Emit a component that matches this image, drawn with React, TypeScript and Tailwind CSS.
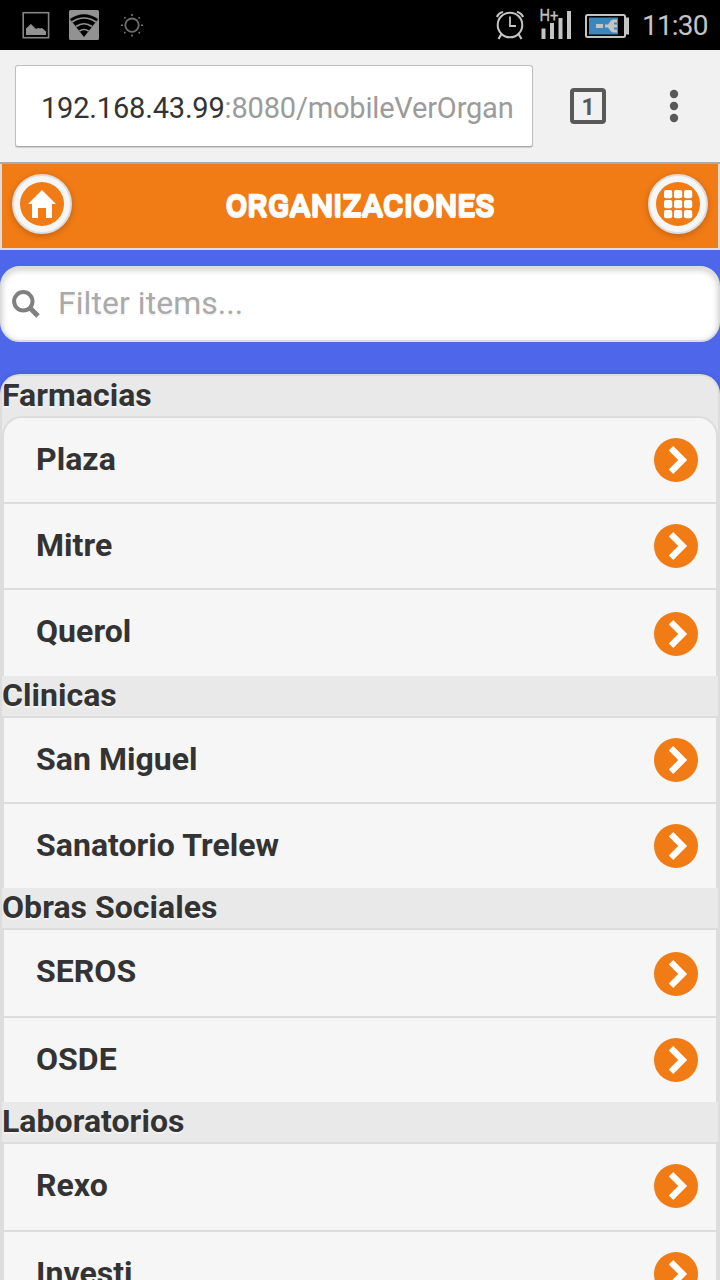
import React from 'react';

type Item = { name: string; height: string; icon: string };
type Section = { title: string; items: Item[] };

const sections: Section[] = [
  {
    title: 'Farmacias',
    items: [
      { name: 'Plaza', height: 'h-[86px] rounded-t-[20px]', icon: 'mt-[20px]' },
      { name: 'Mitre', height: 'h-[86px]', icon: 'mt-[20px]' },
      { name: 'Querol', height: 'h-[88px]', icon: 'mt-[22px]' },
    ],
  },
  {
    title: 'Clinicas',
    items: [
      { name: 'San Miguel', height: 'h-[86px]', icon: 'mt-[20px]' },
      { name: 'Sanatorio Trelew', height: 'h-[86px]', icon: 'mt-[20px]' },
    ],
  },
  {
    title: 'Obras Sociales',
    items: [
      { name: 'SEROS', height: 'h-[88px]', icon: 'mt-[22px]' },
      { name: 'OSDE', height: 'h-[86px]', icon: 'mt-[20px]' },
    ],
  },
  {
    title: 'Laboratorios',
    items: [
      { name: 'Rexo', height: 'h-[88px]', icon: 'mt-[20px]' },
      { name: 'Investi', height: 'h-[86px]', icon: 'mt-[20px]' },
    ],
  },
];

function StatusBar() {
  return (
    <div className="flex h-[50px] shrink-0 items-center bg-black">
      <svg width="160" height="50" viewBox="0 0 160 50" fill="none">
        <rect x="23.2" y="12.7" width="25.4" height="25" stroke="#858585" strokeWidth="1.6" />
        <path d="M26 35V28.500l5-4.500 5 5 2-1 2 0.500 2-0.500 4 3.500V35Z" fill="#929292" />
        <rect x="69" y="10" width="30" height="30" rx="1.500" fill="#929292" />
        <path d="M84 37 69.800 19Q84 9.500 98.200 19Z" fill="#000" />
        <path d="M72 22Q84 14 96 22M76 26.500Q84 21 92 26.500M79.500 31Q84 28 88.500 31" stroke="#929292" strokeWidth="1.700" />
        <circle cx="132" cy="25.200" r="6.700" stroke="#6c6c6c" strokeWidth="1.800" />
        <path d="M131.200 14h1.600v2h-1.600zM131.200 34.500h1.600v2h-1.600zM121 24.500h2v1.600h-2zM141 24.500h2v1.600h-2zM124 17h1.600v1.600H124zM138.500 17h1.600v1.600h-1.600zM124 31.800h1.600v1.600H124zM138.500 31.800h1.600v1.600h-1.600z" fill="#777" />
      </svg>
      <svg className="ml-auto" width="160" height="50" viewBox="480 0 160 50" fill="none">
        <circle cx="510" cy="25" r="12.300" stroke="#c4c4c4" strokeWidth="2" />
        <path d="M510 16.500V26h6" stroke="#c4c4c4" strokeWidth="1.800" />
        <path d="M497 17q1.500-4 6-5M523 17q-1.500-4-6-5M501.500 34l-3 5M518.500 34l3 5" stroke="#c4c4c4" strokeWidth="2.200" />
        <text x="539.500" y="21" fill="#c4c4c4" stroke="#c4c4c4" strokeWidth="0.300" fontFamily="Roboto, sans-serif" fontSize="17" textLength="19" lengthAdjust="spacingAndGlyphs">H+</text>
        <path d="M541.500 28.500h4V39h-4zM550 23h4v16h-4zM558.500 18h4v21h-4zM567 11h4v28h-4z" fill="#c4c4c4" />
        <rect x="586" y="15" width="39" height="22" rx="1.500" stroke="#c4c4c4" strokeWidth="2" />
        <path d="M626 17.500h3v17h-3z" fill="#c4c4c4" />
        <path d="M589 17.500h29v17h-29z" fill="#3b87bb" />
        <path d="M596 24h7v4h-7zM605 24.500h3l3-4 2-1h4v3h-3v2h3v3h-3v2h3v3h-4l-2-1-3-4h-3z" fill="#c4c4c4" />
      </svg>
      <span className="w-[80px] pt-[2px] pl-[2px] text-[28px] leading-[48px] tracking-[-0.8px] text-[#c4c4c4]">11:30</span>
    </div>
  );
}

function BrowserBar() {
  return (
    <div className="flex h-[114px] shrink-0 border-b-2 border-[#aaacac] bg-[#f1f1f1]">
      <div className="ml-[15px] mt-[15px] h-[82px] w-[518px] overflow-hidden rounded-[3px] border border-[#bfbfbf] border-b-[#a9a9a9] bg-white pt-px pl-[25px] text-[29px] leading-[82px] tracking-[-0.18px] whitespace-nowrap text-[#9b9b9b] shadow-[0_1px_1px_rgba(0,0,0,0.15)]">
        <span className="text-[#333]">192.168.43.99</span>:8080/mobileVerOrgan
      </div>
      <div className="ml-[37px] mt-[38px] flex h-[36px] w-[36px] items-center justify-center rounded-[4px] border-4 border-[#595959] pt-[3px] text-[23px] leading-[28px] font-bold text-[#595959]">1</div>
      <svg className="ml-[62px] mt-[38px]" width="12" height="36" viewBox="0 0 12 36" fill="#595959">
        <circle cx="6" cy="6" r="4.200" />
        <circle cx="6" cy="18" r="4.200" />
        <circle cx="6" cy="30" r="4.200" />
      </svg>
    </div>
  );
}

function RoundButton({ children }: { children: React.ReactNode }) {
  return (
    <button className="flex h-[60px] w-[60px] items-center justify-center rounded-full border-2 border-[#ddd] bg-[#f6f6f6] shadow-[0_2px_6px_rgba(0,0,0,0.2)]">
      <svg width="44" height="44" viewBox="0 0 44 44" fill="#fff">
        <circle cx="22" cy="22" r="22" fill="#f17b14" />
        {children}
      </svg>
    </button>
  );
}

function Header() {
  return (
    <header className="flex h-[86px] shrink-0 items-start justify-between border-x-2 border-b-2 border-[#ddd] bg-[#f17b14] px-[10px] pt-[10px]">
      <RoundButton>
        <path d="M22 8 36 22h-4v14h-6V26h-8v10h-6V22H8Z" />
      </RoundButton>
      <h1 className="pt-[1px] text-[32px] leading-[60px] font-bold tracking-[-0.15px] text-white [-webkit-text-stroke:0.7px_white] [text-shadow:0_2px_0_#f3f3f3]">ORGANIZACIONES</h1>
      <RoundButton>
        {[8, 18, 28].map((y) =>
          [8, 18, 28].map((x) => <rect key={`${x}-${y}`} x={x} y={y} width="8.200" height="8.200" rx="2" />),
        )}
      </RoundButton>
    </header>
  );
}

function Row({ item }: { item: Item }) {
  return (
    <li className={`flex justify-between border-x-2 border-t-2 border-[#ddd] bg-[#f6f6f6] pl-[32px] pr-[18px] ${item.height}`}>
      <span className="pt-[22px] text-[32px] leading-[38px]">{item.name}</span>
      <svg className={`shrink-0 ${item.icon}`} width="44" height="44" viewBox="0 0 44 44">
        <circle cx="22" cy="22" r="22" fill="#f17b14" />
        <path d="M17 10.200 28.700 22 17 33.800" fill="none" stroke="#fff" strokeWidth="6.300" />
      </svg>
    </li>
  );
}

export default function App() {
  return (
    <div className="flex h-[1280px] w-[720px] flex-col overflow-hidden bg-[#4d66ea] font-[Roboto,sans-serif]">
      <StatusBar />
      <BrowserBar />
      <Header />
      <div className="mt-[16px] flex h-[76px] shrink-0 items-center rounded-[20px] border-2 border-[#ddd] bg-white pl-[10px] shadow-[inset_0_2px_6px_rgba(0,0,0,0.2)]">
        <svg width="28" height="28" viewBox="0 0 28 28" fill="none" stroke="#808080">
          <circle cx="11.300" cy="11.300" r="9.200" strokeWidth="4" />
          <path d="m17.500 17.500 8.500 8.500" strokeWidth="5" />
        </svg>
        <span className="ml-[18px] pb-[2px] text-[32px] leading-[70px] tracking-[0.05px] text-[#aaa] [text-shadow:0_2px_0_#f3f3f3]">Filter items...</span>
      </div>
      <main className="mt-[32px] h-[906px] shrink-0 overflow-hidden rounded-t-[20px] border-x-2 border-t-2 border-[#ddd] bg-[#e9e9e9] font-bold tracking-[0.04px] text-[#333] shadow-[0_2px_6px_rgba(0,0,0,0.2)] [text-shadow:0_2px_0_#f3f3f3]">
        {sections.map((section) => (
          <section key={section.title}>
            <h2 className="h-[40px] text-[32px] leading-[38px]">{section.title}</h2>
            <ul>
              {section.items.map((item) => (
                <Row key={item.name} item={item} />
              ))}
            </ul>
          </section>
        ))}
      </main>
    </div>
  );
}
